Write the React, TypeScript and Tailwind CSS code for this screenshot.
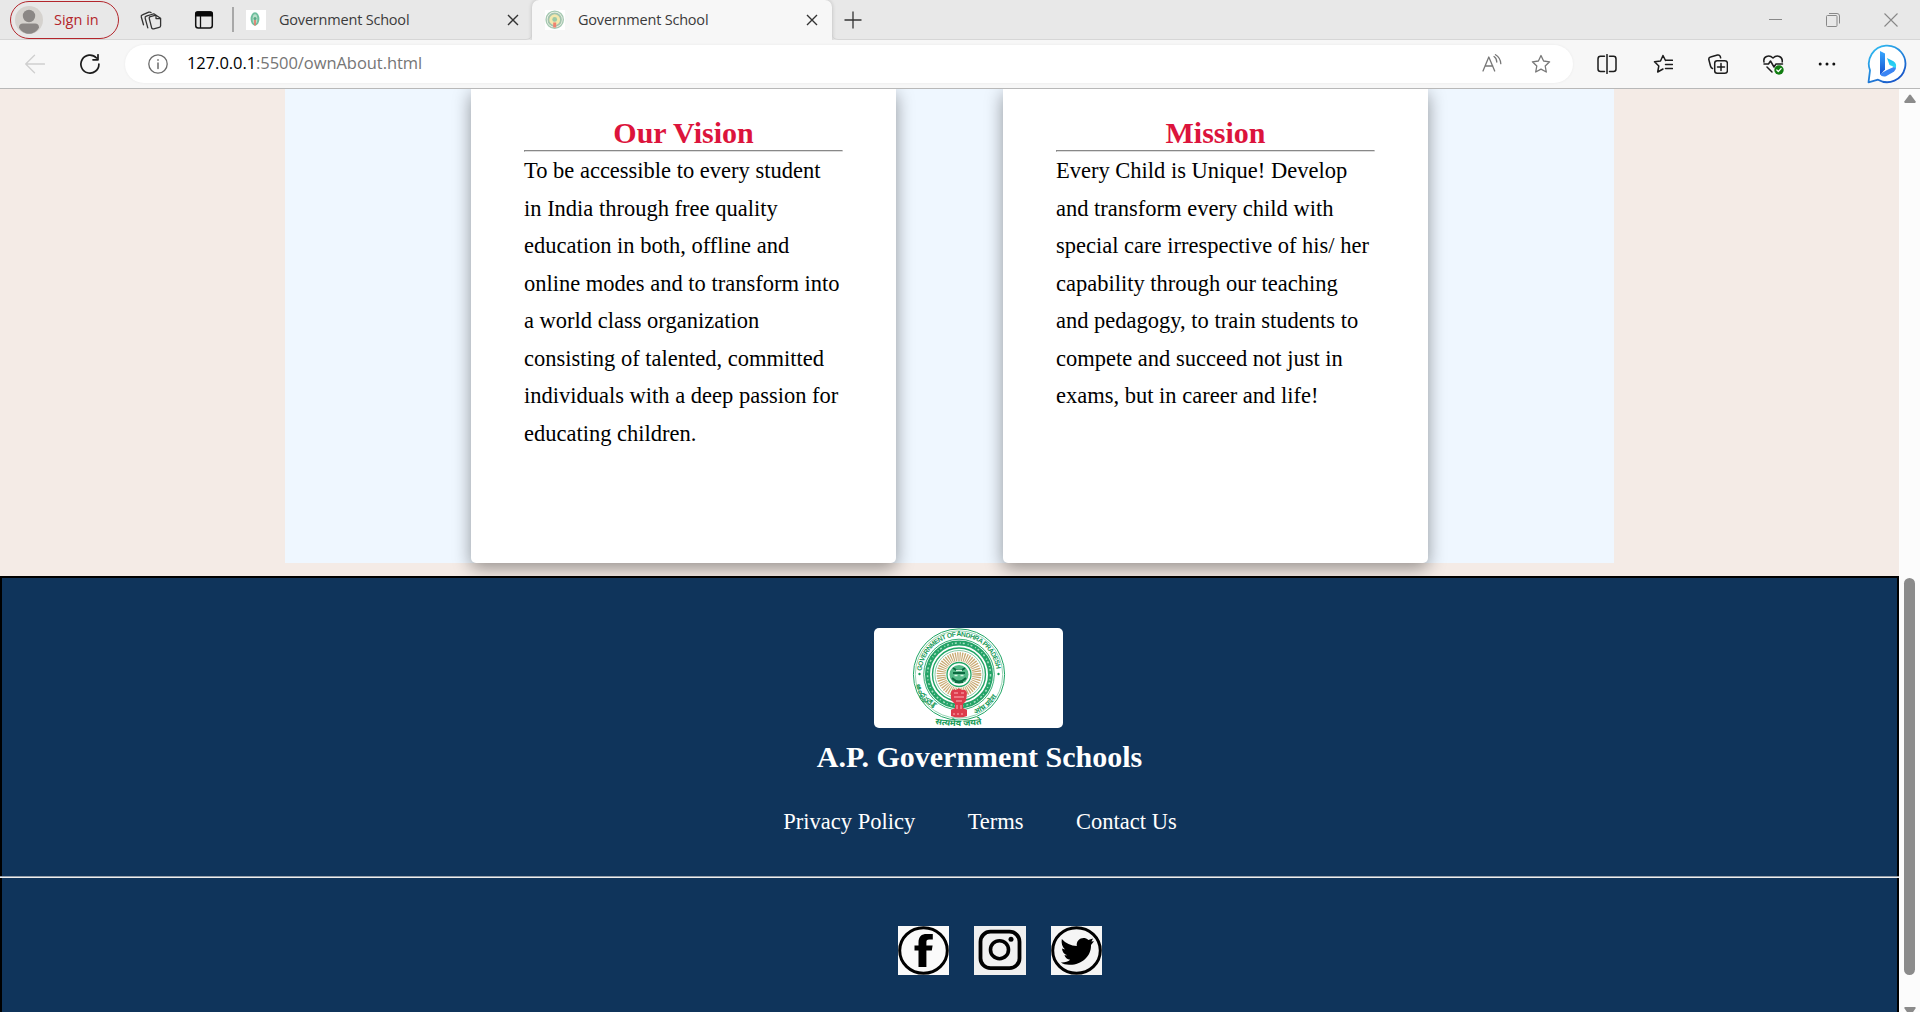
import type { ReactNode } from "react";

const vision = [
  "To be accessible to every student",
  "in India through free quality",
  "education in both, offline and",
  "online modes and to transform into",
  "a world class organization",
  "consisting of talented, committed",
  "individuals with a deep passion for",
  "educating children.",
];

const mission = [
  "Every Child is Unique! Develop",
  "and transform every child with",
  "special care irrespective of his/ her",
  "capability through our teaching",
  "and pedagogy, to train students to",
  "compete and succeed not just in",
  "exams, but in career and life!",
];

function Icon({ children, className = "", size = 20 }: { children: ReactNode; className?: string; size?: number }) {
  return (
    <svg
      width={size}
      height={size}
      viewBox="0 0 20 20"
      fill="none"
      stroke="currentColor"
      strokeWidth="1.3"
      strokeLinecap="round"
      strokeLinejoin="round"
      className={"shrink-0 " + className}
    >
      {children}
    </svg>
  );
}

function Favicon({ small }: { small?: boolean }) {
  return (
    <svg width="20" height="20" viewBox="0 0 20 20" className="shrink-0 bg-white">
      {small ? (
        <>
          <ellipse cx="9" cy="9" rx="3.4" ry="5.7" fill="#b9dfc9" stroke="#6fbf9f" strokeWidth="2" />
          <circle cx="9" cy="8.5" r="1.5" fill="#5aa986" />
          <path d="M9 10v5.5" stroke="#e08070" strokeWidth="1.8" />
        </>
      ) : (
        <>
          <circle cx="9.7" cy="9.7" r="8.6" fill="#f6f6ee" stroke="#a5c9b2" strokeWidth="1.4" />
          <circle cx="9.7" cy="9.7" r="6.3" fill="#f3e8ad" stroke="#a2c4ae" strokeWidth="1.8" />
          <circle cx="9.7" cy="9.4" r="2.4" fill="#9bc9a7" />
          <path d="M9.7 12.5v5" stroke="#ef826f" strokeWidth="3" />
        </>
      )}
    </svg>
  );
}

function TabClose() {
  return (
    <svg width="12" height="12" viewBox="0 0 12 12" stroke="#333" strokeWidth="1.4" className="shrink-0">
      <path d="M1 1l10 10M11 1L1 11" />
    </svg>
  );
}

function TabBar() {
  return (
    <div className="flex h-10 bg-[#e8e8e8] text-[#3b3b3b]">
      <div className="flex w-[532px] items-center rounded-br-md border-b border-[#d6d6d6]">
        <div className="ml-[10px] flex h-[38px] w-[109px] items-center rounded-full border-[1.5px] border-[#b3262c] pl-[4px]">
          <svg width="28" height="28" viewBox="0 0 28 28">
            <circle cx="14" cy="14" r="14" fill="#d5d2ce" />
            <circle cx="14" cy="10" r="6.2" fill="#8b8785" />
            <path d="M4 21.5c0-2.500 1.500-4 4-4h12c2.500 0 4 1.500 4 4-2 4-6 6.300-10 6.300S6 25.500 4 21.500z" fill="#8b8785" />
          </svg>
          <span className="ml-[11px] text-[14.5px] whitespace-nowrap text-[#b3262c]">Sign in</span>
        </div>
        <svg width="22" height="22" viewBox="0 0 22 22" fill="none" stroke="#333" strokeWidth="1.3" strokeLinejoin="round" strokeLinecap="round" className="ml-[21px] shrink-0">
          <path d="M9.300 9.600c-.3-1 .2-1.700 1-1.900l5.700-1.500 4.600 3v7.500c0 1-.5 1.500-1.400 1.700l-5.500 1.500c-1 .2-1.900-.2-2.100-1.200z" />
          <path d="M16 6.300v3.200l4.300.1" />
          <path d="M7.800 18.800L5.200 9.300c-.3-1 .2-1.800 1.100-2.100L13 5c1-.2 1.600 0 2.200.6" />
          <path d="M3.500 15.800L1.300 8c-.3-1 .2-1.800 1.100-2.100L8.800 3.200c1-.3 1.700-.2 2.300.4" />
        </svg>
        <svg width="20" height="20" viewBox="0 0 20 20" fill="none" className="ml-[32px] shrink-0">
          <rect x="1.700" y="2" width="16.600" height="16" rx="2.500" stroke="#111" strokeWidth="1.500" />
          <path d="M1 6.500V3.500Q1 1.300 3.500 1.300h13Q19 1.300 19 3.500v3z" fill="#080808" />
          <path d="M6.500 6v12" stroke="#111" strokeWidth="1.300" />
        </svg>
        <div className="ml-[18px] h-[25px] w-[2px] bg-[#a8a8a8]" />
        <div className="ml-[12px] flex items-center"><Favicon small /></div>
        <span className="ml-[13px] w-[228px] text-[14.500px] tracking-[-0.2px] whitespace-nowrap">Government School</span>
        <TabClose />
      </div>
      <div className="flex w-[300px] items-center rounded-t-[7px] bg-[#f7f7f7] pl-[13px] shadow-[0_0_4px_rgba(0,0,0,0.2)] [clip-path:inset(0_-4px_0_-4px)]">
        <Favicon />
        <span className="ml-[13px] w-[228px] text-[14.500px] tracking-[-0.2px] whitespace-nowrap">Government School</span>
        <TabClose />
      </div>
      <div className="flex grow items-center rounded-bl-md border-b border-[#d6d6d6] pl-[12px]">
        <svg width="18" height="18" viewBox="0 0 18 18" stroke="#333" strokeWidth="1.300"><path d="M9 .5v17M.5 9h17" /></svg>
        <div className="ml-auto flex items-center pr-[22px]">
          <svg width="13" height="13" viewBox="0 0 13 13" stroke="#888" className="mr-[44px]"><path d="M0 6.500h13" /></svg>
          <svg width="14" height="14" viewBox="0 0 14 14" fill="none" stroke="#888" className="mr-[44px]"><rect x=".5" y="2.500" width="10.500" height="11" rx="1" /><path d="M3 .5h8q2.500 0 2.500 2.500v7.500" /></svg>
          <svg width="14" height="14" viewBox="0 0 14 14" stroke="#888" strokeWidth="1.100"><path d="M.5.5l13 13M13.500.5l-13 13" /></svg>
        </div>
      </div>
    </div>
  );
}

const star = "M10 1.500l2.600 5.500 6 .8-4.400 4.200 1.100 6L10 15.100 4.700 18l1.100-6L1.400 7.800l6-.8z";

function Toolbar() {
  return (
    <div className="flex h-[49px] items-center border-b border-[#b8b8b8] bg-[#f7f7f7] text-[#1c1c1c]">
      <Icon className="ml-[25px] text-[#cfcfcf]"><path d="M19.500 10H.7M9.500 1.200L.7 10l8.800 8.800" /></Icon>
      <Icon className="ml-[35px]"><path strokeWidth="1.700" d="M18.900 10A9 9 0 1 1 16.500 4M18 .800v5h-5" /></Icon>
      <div className="ml-[25px] flex h-[38px] w-[1448px] items-center rounded-full bg-white pl-[23px] shadow-[0_0_3px_rgba(0,0,0,0.06)]">
        <Icon className="text-[#6b6b6b]"><circle cx="10" cy="10" r="9.200" /><path d="M10 9v5.500M10 5.800v.4" strokeWidth="1.500" /></Icon>
        <span className="mb-px ml-[19px] text-[16.500px] tracking-[-0.06px] whitespace-nowrap text-[#767676]"><span className="text-black">127.0.0.1</span>:5500/ownAbout.html</span>
        <Icon className="ml-auto text-[#777]"><path d="M1 17L6.800 3 12.700 17M3 12h7.800M12 2.500q2.500 1.500 2.800 5.500M13.500.700q5 3 5.300 9" /></Icon>
        <Icon className="mr-[22px] ml-[29px] text-[#777]"><path d={star} /></Icon>
      </div>
      <Icon className="ml-[24px]"><path d="M7.500 2.300h-4Q1 2.300 1 5v10q0 2.500 2.500 2.500h4M12.500 2.300h4Q19 2.300 19 5v10q0 2.500-2.500 2.500h-4M10 .5v19" strokeWidth="1.500" /></Icon>
      <Icon className="ml-[36px]"><path strokeWidth="1.500" d="M12.500 6.500L10 1.500 7.500 7l-6 .8L5.800 12l-1.100 6 5.300-3M13 6.300h6.500M12.500 10.500h7M12.500 14.600h7" /></Icon>
      <Icon className="ml-[35px]"><rect x="6.700" y="6.700" width="12.700" height="12.500" rx="2.500" strokeWidth="1.500" /><path strokeWidth="1.500" d="M13 9.500v7M9.500 13h7M4.500 14.500Q3 14 2.500 12L.8 5.500Q.5 3.500 2.500 3L9.500 1q2-.4 2.700 1.300l.4 1.500" /></Icon>
      <svg width="21" height="21" viewBox="0 0 21 21" fill="none" stroke="#1c1c1c" strokeWidth="1.500" strokeLinecap="round" strokeLinejoin="round" className="ml-[35px]">
        <path d="M1 8C-.2 2.500 6 .2 10 4c4-3.800 10-1.500 9.200 4M1 10h4.500l2-3 3.500 6 2-3h6.500M4 13l5 5" />
        <circle cx="16" cy="16" r="4.700" fill="#107c10" stroke="none" /><path d="M13.800 16l1.500 1.500 2.800-3" stroke="#fff" strokeWidth="1.200" />
      </svg>
      <Icon className="ml-[33px]"><g fill="#111" stroke="none"><circle cx="3.200" cy="10" r="1.500" /><circle cx="10" cy="10" r="1.500" /><circle cx="16.800" cy="10" r="1.500" /></g></Icon>
      <svg width="40" height="40" viewBox="0 0 40 40" className="ml-[30px] shrink-0">
        <defs>
          <linearGradient id="ring" x1="0" y1="0" x2=".7" y2="1"><stop stopColor="#32c5f5" /><stop offset="1" stopColor="#1856c8" /></linearGradient>
          <linearGradient id="stem" x1="0" y1="0" x2="0" y2="1"><stop stopColor="#37a8ff" /><stop offset="1" stopColor="#164fce" /></linearGradient>
          <linearGradient id="leaf" x1="0" y1="0" x2="0" y2="1"><stop stopColor="#1eb9ee" /><stop offset="1" stopColor="#2fdcf5" /></linearGradient>
        </defs>
        <path d="M1.500 38.300l1.500-12A18.300 18.300 0 1 1 11 35.700z" fill="#fff" stroke="url(#ring)" strokeWidth="1.800" strokeLinejoin="round" />
        <path d="M13 7l5 2.500v16L13 31z" fill="url(#stem)" />
        <path d="M13 30l7-4 9-4q.5 4-3.500 6.500l-6.500 3.800q-4.500 1-6-2.300z" fill="#3b85f4" />
        <path d="M20 14l6.500 3.300q4 3 2 7L25 22l-2.500-1z" fill="url(#leaf)" />
      </svg>
    </div>
  );
}

function Card({ title, lines }: { title: string; lines: string[] }) {
  return (
    <article className="h-[474px] w-[425px] rounded-b-[5px] bg-white px-[53px] pt-[27px] shadow-[0_5px_18px_rgba(0,0,0,0.4)]">
      <h2 className="h-[34px] text-center text-[30px] leading-[33px] font-bold text-[#dc143c]">{title}</h2>
      <div className="h-[2px] border border-t-[#888] border-r-[#ededed] border-b-[#ddd] border-l-[#888]" />
      <p className="text-[22.500px] leading-[37.500px] whitespace-nowrap text-black">
        {lines.map((line) => <span key={line} className="block">{line}</span>)}
      </p>
    </article>
  );
}

function Emblem() {
  return (
    <svg width="189" height="100" viewBox="0 0 189 100" className="ml-[38px] rounded-[5px] bg-white" fill="none">
      <defs>
        <path id="topArc" d="M47.500 46a37.500 37.500 0 0 1 75 0" />
        <path id="leftArc" d="M42.500 57a43 43 0 0 0 27 29" />
        <path id="rightArc" d="M101 86a43 43 0 0 0 26.500-29" />
        <path id="mottoArc" d="M61 96q23 4 48 0" />
      </defs>
      <circle cx="85" cy="46.500" r="45.600" stroke="#20a565" />
      <circle cx="85" cy="46.500" r="43.700" stroke="#7bc8a0" strokeWidth=".8" />
      <circle cx="85" cy="46.500" r="35.300" stroke="#20a565" strokeWidth=".9" />
      <circle cx="85" cy="46.500" r="31.500" stroke="#24a367" strokeWidth="5" />
      <circle cx="85" cy="46.500" r="31.500" stroke="#a9dfc3" strokeWidth="1.500" strokeDasharray="2 3 1 2" />
      <circle cx="85" cy="46.500" r="26.500" stroke="#20a565" strokeWidth="1.400" />
      <circle cx="85" cy="46.500" r="24" stroke="#66bd90" strokeWidth=".8" />
      <circle cx="85" cy="46.500" r="17.800" stroke="#c9aa73" strokeWidth="9" strokeDasharray="1.200 .95" />
      <circle cx="85" cy="46.500" r="12" fill="#fff" stroke="#20a565" strokeWidth="1.300" />
      <circle cx="85" cy="46.500" r="9.500" fill="#55b987" />
      <path d="M79 40q6 5 12 0M79 45h12M78 50q7 7 14 0M81 54h8" stroke="#0b6a40" strokeWidth="1.800" />
      <path d="M82 42.500h6M80.500 47.500h3M86.500 47.500h3" stroke="#d8f3e3" strokeWidth="1.300" />
      <path d="M77 64q2-4 5-2 3-3 6 0 4-1 5 3l-1 8-3 3v4l4 2v6q-8 3-16 0v-6l4-2v-4l-4-4z" fill="#dd3c4c" />
      <path d="M80 65h4m3 0h3M80 69h10M82 73h6M83 77v4m4-4v4M79 86h2m2 0h2m2 0h2" stroke="#ffb3ba" strokeWidth="1" />
      <g fill="#169a58" fontFamily="'Liberation Sans', sans-serif" fontWeight="bold">
        <text fontSize="6.700"><textPath href="#topArc" startOffset="3" textLength="110">GOVERNMENT OF ANDHRA PRADESH</textPath></text>
        <g fontFamily="'Noto Sans', sans-serif" fontSize="7">
          <text><textPath href="#leftArc">ఆంధ్రప్రదేశ్</textPath></text>
          <text><textPath href="#rightArc">आंध्र प्रदेश</textPath></text>
          <text fontSize="8.500"><textPath href="#mottoArc" textLength="47" lengthAdjust="spacingAndGlyphs">सत्यमेव जयते</textPath></text>
        </g>
      </g>
      <circle cx="45.500" cy="46" r="1.200" fill="#169a58" /><circle cx="124.500" cy="46" r="1.200" fill="#169a58" />
    </svg>
  );
}

function Footer() {
  return (
    <footer className="flex h-[436px] flex-col items-center border-x-2 border-t-2 border-black bg-[#0f345b] pt-[50px] text-white">
      <Emblem />
      <h2 className="mt-[12px] ml-[60px] text-[30px] leading-[33px] font-bold">A.P. Government Schools</h2>
      <nav className="mt-[36px] ml-[61px] flex gap-[52.500px] text-[22.500px] leading-[25px]">
        <a>Privacy Policy</a><a>Terms</a><a>Contact Us</a>
      </nav>
      <div className="mx-[-2px] mt-[42px] h-[2px] w-[1899px] border-t border-[#929da9] bg-[#eee]" />
      <div className="mt-[48px] ml-[101px] flex gap-[25px]">
        <svg width="51" height="49" viewBox="0 0 51 49" className="bg-[#fafafa]">
          <ellipse cx="25.500" cy="24.500" rx="23.800" ry="22.800" fill="none" stroke="#000" strokeWidth="3" />
          <path d="M20.500 41V24.500h-4v-5h4v-3c0-6 3-8.500 8.300-8.500h6v5.600h-3.700c-2.200 0-2.700.9-2.700 2.800v3.100h6.200l-.8 5h-5.400V41z" />
        </svg>
        <svg width="52" height="49" viewBox="0 0 52 49" className="bg-[#f0f0f0]" fill="none" stroke="#000">
          <rect x="6.500" y="5.700" width="39" height="36.500" rx="10" strokeWidth="3.800" />
          <circle cx="25.500" cy="23.700" r="9" strokeWidth="3.600" /><circle cx="37" cy="13.300" r="2.500" fill="#000" stroke="none" />
        </svg>
        <svg width="51" height="49" viewBox="0 0 51 49" className="bg-[#f5f5f5]">
          <ellipse cx="25.500" cy="24.500" rx="23.800" ry="22.800" fill="none" stroke="#000" strokeWidth="3" />
          <path d="M10.800 13c4 4.500 9 6.700 15 7-1-7 7-10.500 11.500-6l4.700-1.500-1.500 3 2.500-.3-3 3.700c.5 12-10.500 20.500-22 19.800-3 0-6-.7-8.200-2.200 4 .2 7-.7 9.400-2.700-3.200-.4-5-2.400-5.800-4.500h2.800c-3.200-1-5-3.500-5.200-6.700l3 .8c-3-2.600-3.800-6.500-3.200-10.400z" />
        </svg>
      </div>
    </footer>
  );
}

export default function App() {
  return (
    <div className="h-[1012px] w-[1920px] overflow-hidden font-['Open_Sans',sans-serif]">
      <TabBar />
      <Toolbar />
      <div className="flex h-[923px]">
        <div className="w-[1899px] bg-[#f4ebe6] font-['Liberation_Serif',serif]">
          <main className="flex h-[487px] flex-col">
            <section className="ml-[285px] flex h-[474px] w-[1329px] gap-[107px] bg-[#eff7ff] pl-[186px] [clip-path:inset(0_0_-13px_0)]">
              <Card title="Our Vision" lines={vision} />
              <Card title="Mission" lines={mission} />
            </section>
          </main>
          <Footer />
        </div>
        <div className="flex w-[21px] flex-col items-center overflow-hidden bg-[#fcfcfc]">
          <svg width="12" height="9" viewBox="0 0 12 9" className="mt-[5px] shrink-0"><path d="M5 1.200Q6 0 7 1.200l4.500 6Q12 9 11 9H1Q0 9 .5 7.200z" fill="#8b8b8b" /></svg>
          <div className="mt-[475px] h-[397px] w-[11px] shrink-0 rounded-full bg-[#8b8b8b]" />
          <svg width="12" height="9" viewBox="0 0 12 9" className="mt-[32px] shrink-0"><path d="M1 0h10q1 0 .5 1.500L7 8H5L.5 1.500Q0 0 1 0z" fill="#8b8b8b" /></svg>
        </div>
      </div>
    </div>
  );
}
